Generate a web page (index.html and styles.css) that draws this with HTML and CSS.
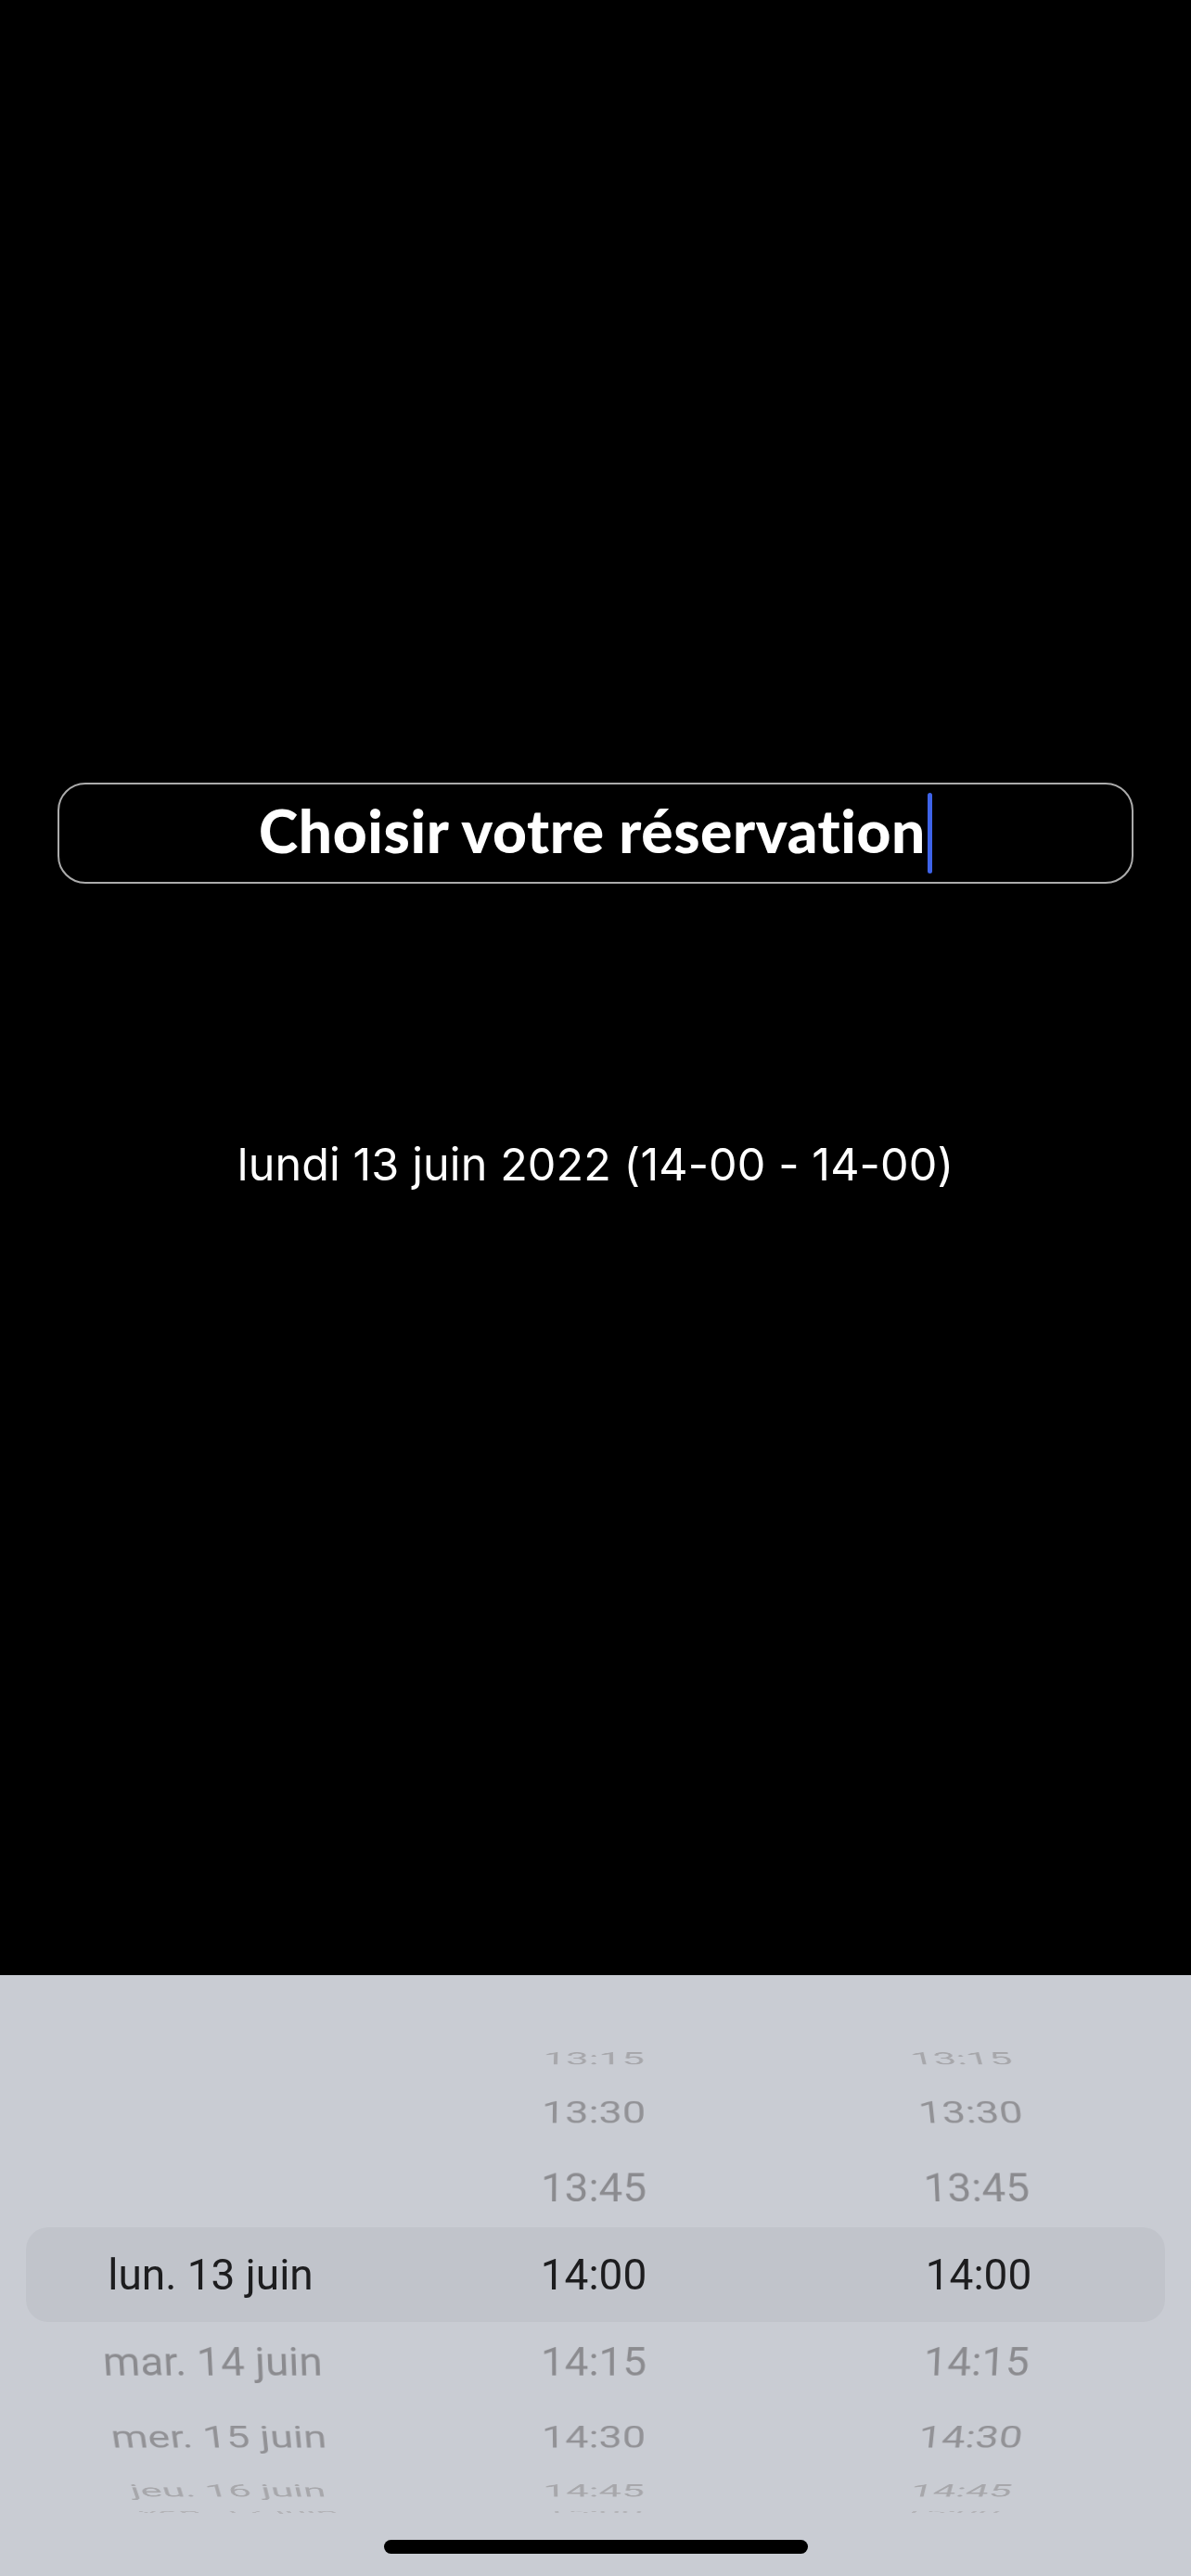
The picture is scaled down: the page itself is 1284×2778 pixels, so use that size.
FILE: index.html
```html
<!DOCTYPE html>
<html lang="fr">
<head>
    <meta charset="UTF-8">
    <meta name="viewport" content="width=device-width, initial-scale=1.0">
    <title>Choisir votre réservation</title>
    <link rel="stylesheet" href="styles.css">
</head>
<body>
    <div class="screen">
        <div class="field">
            <span class="field-text">Choisir votre réservation</span><span class="caret"></span>
        </div>

        <p class="summary">lundi 13 juin 2022 (14-00 - 14-00)</p>

        <div class="picker">
            <div class="wheel">
                <div class="band"></div>
                <div class="col col-date">
                    <div class="item sel">lun. 13 juin</div>
                    <div class="item dn1">mar. 14 juin</div>
                    <div class="item dn2">mer. 15 juin</div>
                    <div class="item dn3">jeu. 16 juin</div>
                    <div class="item dn4">ven. 17 juin</div>
                </div>
                <div class="col col-start">
                    <div class="item up3">13:15</div>
                    <div class="item up2">13:30</div>
                    <div class="item up1">13:45</div>
                    <div class="item sel">14:00</div>
                    <div class="item dn1">14:15</div>
                    <div class="item dn2">14:30</div>
                    <div class="item dn3">14:45</div>
                    <div class="item dn4">15:00</div>
                </div>
                <div class="col col-end">
                    <div class="item up3">13:15</div>
                    <div class="item up2">13:30</div>
                    <div class="item up1">13:45</div>
                    <div class="item sel">14:00</div>
                    <div class="item dn1">14:15</div>
                    <div class="item dn2">14:30</div>
                    <div class="item dn3">14:45</div>
                    <div class="item dn4">15:00</div>
                </div>
            </div>
            <div class="home-bar"></div>
        </div>
    </div>
</body>
</html>
```

FILE: styles.css
```css
html, body {
    margin: 0;
    padding: 0;
    background: #000;
}
.screen {
    height: 2778px;
    display: flex;
    flex-direction: column;
    font-family: Roboto, "Liberation Sans", sans-serif;
    color: #fff;
}

/* text field */
.field {
    box-sizing: border-box;
    margin: 844px 62px 0;
    height: 109px;
    border: 2px solid #ababab;
    border-radius: 30px;
    display: flex;
    align-items: center;
    justify-content: center;
    padding-bottom: 6px;
}
.field-text {
    font-family: Lato, "Open Sans", sans-serif;
    font-weight: 900;
    font-size: 64px;
    letter-spacing: 0.6px;
    font-variant-ligatures: none;
    line-height: 1;
}
.caret {
    width: 5px;
    height: 87px;
    margin-left: 2px;
    margin-top: 6px;
    border-radius: 3px;
    background: #3e63e8;
}

.summary {
    margin: 279px 0 0;
    font-family: Inter, Roboto, sans-serif;
    font-size: 48.5px;
    letter-spacing: 0.1px;
    line-height: 1;
    text-align: center;
}

/* date picker */
.picker {
    margin-top: auto;
    height: 648px;
    background: #c9ccd3;
    display: flex;
    flex-direction: column;
    align-items: center;
}
.wheel {
    align-self: stretch;
    margin-top: 64px;
    height: 518px;
    overflow: hidden;
    display: grid;
    grid-template-columns: 454px 372px 458px;
    grid-template-rows: 100%;
}
.band {
    grid-column: 1 / -1;
    grid-row: 1;
    align-self: center;
    height: 102px;
    margin: 0 28px;
    border-radius: 24px;
    background: #c1c4cb;
}
.col {
    grid-row: 1;
    display: grid;
    grid-template-rows: 100%;
    perspective: 3000px;
}
.col-date { grid-column: 1; perspective-origin: 642px 50%; }
.col-start { grid-column: 2; perspective-origin: 188px 50%; }
.col-end { grid-column: 3; perspective-origin: -184px 50%; }

.item {
    grid-area: 1 / 1;
    align-self: center;
    height: 102px;
    line-height: 102px;
    text-align: center;
    font-size: 46px;
    white-space: nowrap;
    transform-origin: 50% 50% -280px;
}
.sel { color: #1d1d1f; }
.up1 { transform: rotateX(19.7deg); color: #8b8b8f; }
.up2 { transform: rotateX(39.7deg); color: #929296; }
.up3 { transform: rotateX(60.7deg); color: #a7a7ab; }
.dn1 { transform: rotateX(-19.7deg); color: #8b8b8f; }
.dn2 { transform: rotateX(-39.7deg); color: #929296; }
.dn3 { transform: rotateX(-60.7deg); color: #a7a7ab; }
.dn4 { transform: rotateX(-80deg); color: #b3b3b7; }

.home-bar {
    margin-top: 27px;
    width: 457px;
    height: 15px;
    border-radius: 8px;
    background: #000;
}
```
